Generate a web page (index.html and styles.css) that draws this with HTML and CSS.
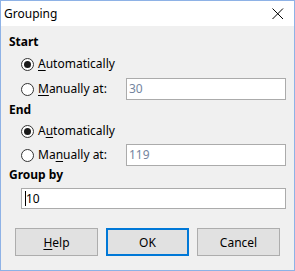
FILE: index.html
```html
<!DOCTYPE html>
<html>
<head>
<meta charset="utf-8">
<link rel="stylesheet" href="styles.css">
</head>
<body>
<div class="window">
  <div class="titlebar">
    <span class="title">Grouping</span>
    <svg class="close" width="12" height="12" viewBox="0 0 12 12"><path d="M0.5 0.5 L11 11 M11 0.5 L0.5 11" stroke="#000" stroke-width="1" fill="none"/></svg>
  </div>
  <div class="content">
    <div class="heading h-start">Start</div>
    <div class="option opt-first">
      <span class="radio checked"></span>
      <span class="label"><u>A</u>utomatically</span>
    </div>
    <div class="option opt-manual">
      <span class="radio"></span>
      <span class="label"><u>M</u>anually at:</span>
      <span class="field disabled">30</span>
    </div>
    <div class="heading h-end">End</div>
    <div class="option opt-first2">
      <span class="radio checked"></span>
      <span class="label">A<u>u</u>tomatically</span>
    </div>
    <div class="option opt-manual">
      <span class="radio"></span>
      <span class="label">Ma<u>n</u>ually at:</span>
      <span class="field disabled">119</span>
    </div>
    <div class="heading h-group">Group by</div>
    <div class="field wide"><span class="caret"></span>10</div>
    <div class="buttons">
      <button class="btn"><u>H</u>elp</button>
      <button class="btn default">OK</button>
      <button class="btn">Cancel</button>
    </div>
  </div>
</div>
</body>
</html>
```
FILE: styles.css
```css
* { box-sizing: border-box; }
html, body { margin: 0; padding: 0; }
body {
  font-family: "Segoe UI", "Noto Sans", sans-serif;
  font-size: 12px;
  color: #000;
  background: #fff;
}
.window {
  width: 295px;
  height: 271px;
  border: 1px solid #8eb2e6;
  background: #f0f0f0;
  display: flex;
  flex-direction: column;
}
.titlebar {
  height: 25px;
  background: #fff;
  display: flex;
  align-items: center;
  justify-content: space-between;
  padding: 0 10px 0 3px;
  flex: none;
}
.title { font-size: 12px; line-height: 16px; }
.close { display: block; margin-top: 1px; }
.content {
  padding: 8px 8px 0 8px;
  display: flex;
  flex-direction: column;
}
.heading {
  font-weight: bold;
  height: 16px;
  line-height: 16px;
}
.h-end { margin-top: 2px; }
.h-group { margin-top: 1px; }
.option {
  display: flex;
  align-items: center;
  padding-left: 12px;
}
.opt-first { height: 28px; }
.opt-first2 { height: 26px; }
.opt-manual { height: 22px; }
.radio {
  width: 13px;
  height: 13px;
  border: 1px solid #333;
  border-radius: 50%;
  background: #fff;
  flex: none;
  margin-right: 4px;
  position: relative;
}
.radio.checked::after {
  content: "";
  position: absolute;
  left: 2px;
  top: 2px;
  width: 7px;
  height: 7px;
  border-radius: 50%;
  background: #1a1a1a;
}
.label { flex: 1; line-height: 16px; }
u { text-decoration: underline; text-underline-offset: 2px; }
.field {
  display: flex;
  align-items: center;
  background: #fff;
  border: 1px solid #ababab;
  height: 22px;
  padding-left: 2px;
  line-height: 16px;
}
.opt-manual .field { width: 160px; flex: none; }
.field.disabled { color: #7485a0; }
.field.wide {
  margin-left: 12px;
  margin-top: 5px;
  height: 21px;
  padding-left: 3px;
}
.caret {
  display: inline-block;
  width: 1px;
  height: 15px;
  background: #000;
  margin-right: 0px;
}
.buttons {
  display: flex;
  gap: 8px;
  margin-top: 19px;
  padding-left: 6px;
}
.btn {
  width: 83px;
  height: 28px;
  background: #e1e1e1;
  border: 1px solid #adadad;
  font-family: "Segoe UI", "Noto Sans", sans-serif;
  font-size: 12px;
  color: #000;
  padding: 0;
  margin: 0;
}
.btn.default { border: 2px solid #0078d7; }
```
